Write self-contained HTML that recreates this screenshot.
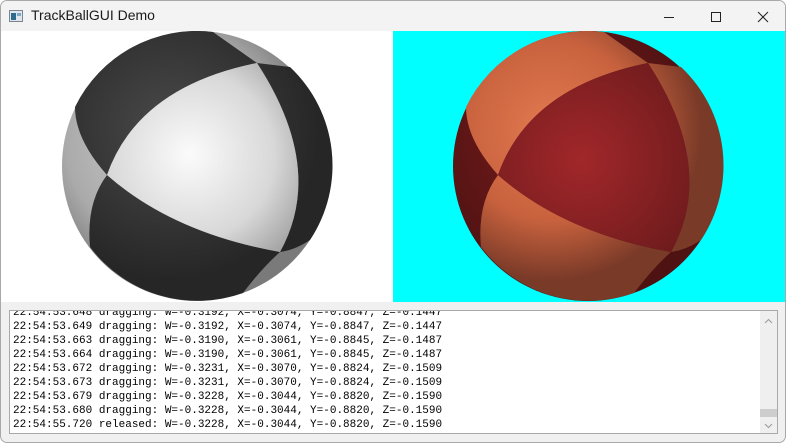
<!DOCTYPE html>
<html><head><meta charset="utf-8"><style>
html,body{margin:0;padding:0;width:786px;height:443px;overflow:hidden;background:#fff;}
.win{position:absolute;left:0;top:0;width:784px;height:441px;border:1px solid #a8a8a8;border-radius:7px;background:#f0f0f0;overflow:hidden;}
.title{position:absolute;left:0;top:0;width:784px;height:30px;background:#f3f3f3;}
.title span{position:absolute;left:30px;top:6px;font:14px "Liberation Sans",sans-serif;color:#1a1a1a;}
.log{position:absolute;left:8px;top:309px;width:767px;height:122px;border:1px solid #a9a9a9;background:#fff;overflow:hidden;}
.txt{position:absolute;left:3px;top:-5px;font:11px/14px "Liberation Mono","DejaVu Sans Mono",monospace;color:#000;white-space:pre;}
.sb{position:absolute;right:0;top:0;width:17px;height:122px;background:#efefef;}
</style></head><body>
<div class="win">
<div class="title">
<svg style="position:absolute;left:8px;top:9px" width="14" height="12"><rect x="0.5" y="0.5" width="13" height="11" fill="#dfe6ec" stroke="#7b8690"/><rect x="2" y="3" width="5" height="7" fill="#2f6b8d"/><rect x="8" y="3" width="4" height="3" fill="#79a9c8"/></svg>
<span>TrackBallGUI Demo</span>
<svg style="position:absolute;left:660px;top:8px" width="120" height="16" fill="none" stroke="#222" stroke-width="1">
<line x1="3" y1="8.5" x2="13" y2="8.5"/>
<rect x="50.5" y="3.5" width="9" height="9"/>
<line x1="97" y1="3" x2="107" y2="13"/><line x1="107" y1="3" x2="97" y2="13"/>
</svg>
</div>
<svg style="position:absolute;left:0;top:30px" width="784" height="271" viewBox="1 31 784 271">
<defs>
<radialGradient id="gL" gradientUnits="userSpaceOnUse" cx="190" cy="155" r="140"><stop offset="0" stop-color="#fbfbfb"/><stop offset="0.6" stop-color="#d8d8d8"/><stop offset="1" stop-color="#9a9a9a"/></radialGradient>
<radialGradient id="gD" gradientUnits="userSpaceOnUse" cx="170" cy="130" r="150"><stop offset="0" stop-color="#4a4a4a"/><stop offset="1" stop-color="#262626"/></radialGradient>
<radialGradient id="gG" gradientUnits="userSpaceOnUse" cx="170" cy="140" r="150"><stop offset="0" stop-color="#d0d0d0"/><stop offset="0.7" stop-color="#aaaaaa"/><stop offset="1" stop-color="#7a7a7a"/></radialGradient>
<radialGradient id="rL" gradientUnits="userSpaceOnUse" cx="190" cy="160" r="140"><stop offset="0" stop-color="#a1272a"/><stop offset="1" stop-color="#6a1a1c"/></radialGradient>
<radialGradient id="rD" gradientUnits="userSpaceOnUse" cx="160" cy="130" r="150"><stop offset="0" stop-color="#e27a50"/><stop offset="0.6" stop-color="#c8623e"/><stop offset="1" stop-color="#7a3a28"/></radialGradient>
<radialGradient id="rG" gradientUnits="userSpaceOnUse" cx="170" cy="140" r="150"><stop offset="0" stop-color="#7a1c1c"/><stop offset="1" stop-color="#4e1212"/></radialGradient>
</defs>
<rect x="1" y="31" width="392" height="271" fill="#ffffff"/>
<rect x="393" y="31" width="392" height="271" fill="#00ffff"/>
<g>
<circle cx="197" cy="166" r="135" fill="url(#gG)"/>
<path d="M107 175 Q138 87 257 63 L213 32 A135 135 0 0 0 75 107 Q75 139 107 175Z" fill="url(#gD)"/>
<path d="M257 63 L290 67 A135 135 0 0 1 310 240 Q295 250 280 252 Q326 169 257 63Z" fill="url(#gD)"/>
<path d="M107 175 Q86 203 90 247 A135 135 0 0 0 243 293 Q262 268 280 252 Q173 233 107 175Z" fill="url(#gD)"/>
<path d="M107 175 Q138 87 257 63 Q326 169 280 252 Q173 233 107 175Z" fill="url(#gL)"/>
</g>
<g transform="translate(391,0)">
<circle cx="197" cy="166" r="135" fill="url(#rG)"/>
<path d="M107 175 Q138 87 257 63 L213 32 A135 135 0 0 0 75 107 Q75 139 107 175Z" fill="url(#rD)"/>
<path d="M257 63 L290 67 A135 135 0 0 1 310 240 Q295 250 280 252 Q326 169 257 63Z" fill="url(#rD)"/>
<path d="M107 175 Q86 203 90 247 A135 135 0 0 0 243 293 Q262 268 280 252 Q173 233 107 175Z" fill="url(#rD)"/>
<path d="M107 175 Q138 87 257 63 Q326 169 280 252 Q173 233 107 175Z" fill="url(#rL)"/>
</g>
</svg>
<div class="log">
<div class="txt">22:54:53.648 dragging: W=-0.3192, X=-0.3074, Y=-0.8847, Z=-0.1447
22:54:53.649 dragging: W=-0.3192, X=-0.3074, Y=-0.8847, Z=-0.1447
22:54:53.663 dragging: W=-0.3190, X=-0.3061, Y=-0.8845, Z=-0.1487
22:54:53.664 dragging: W=-0.3190, X=-0.3061, Y=-0.8845, Z=-0.1487
22:54:53.672 dragging: W=-0.3231, X=-0.3070, Y=-0.8824, Z=-0.1509
22:54:53.673 dragging: W=-0.3231, X=-0.3070, Y=-0.8824, Z=-0.1509
22:54:53.679 dragging: W=-0.3228, X=-0.3044, Y=-0.8820, Z=-0.1590
22:54:53.680 dragging: W=-0.3228, X=-0.3044, Y=-0.8820, Z=-0.1590
22:54:55.720 released: W=-0.3228, X=-0.3044, Y=-0.8820, Z=-0.1590</div>
<div class="sb">
<svg width="17" height="122" fill="none" stroke="#9a9a9a" stroke-width="1"><polyline points="5,12 8.5,8.5 12,12"/><rect x="0" y="98" width="17" height="8" fill="#cdcdcd" stroke="none"/><polyline points="5,113 8.5,116.5 12,113"/></svg>
</div>
</div>
</div>
</body></html>
